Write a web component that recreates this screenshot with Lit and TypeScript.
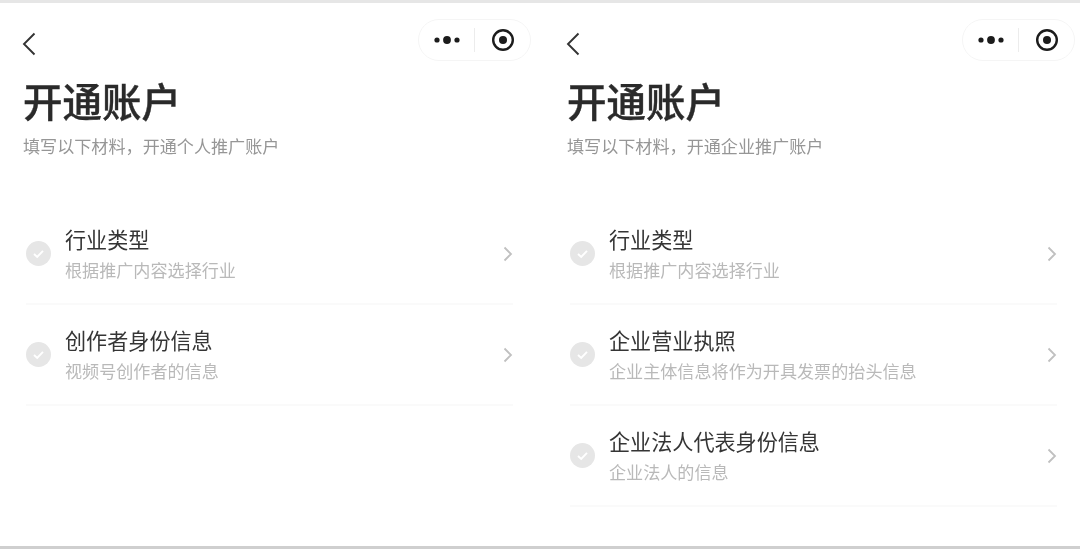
import { html, css, LitElement } from 'lit';
import { customElement, property } from 'lit/decorators.js';

interface Step {
    title: string;
    desc: string;
}

@customElement('account-panel')
export class AccountPanel extends LitElement {
    static styles = css`
        :host {
            display: block;
            flex: none;
            width: 544px;
            box-sizing: border-box;
            filter: blur(0.5px);
        }

        .nav {
            height: 53px;
            display: flex;
            justify-content: space-between;
            padding: 16px 13px 0 22px;
        }

        .back {
            width: 14px;
            height: 24px;
            margin-top: 13px;
        }

        .capsule {
            width: 113px;
            height: 42px;
            box-sizing: border-box;
            border: 1px solid #f5f5f5;
            border-radius: 21px;
            display: flex;
            align-items: center;
        }

        .capsule div {
            flex: 1;
            height: 24px;
            display: flex;
            align-items: center;
            justify-content: center;
        }

        .capsule div + div {
            border-left: 1px solid #ececec;
        }

        .head {
            padding: 0 23px;
        }

        h1 {
            margin: 0;
            font-size: 39.5px;
            line-height: 56px;
            font-weight: 500;
            color: #2a2a2a;
            -webkit-text-stroke: 0.4px #2a2a2a;
        }

        .intro {
            margin: 6px 0 0;
            font-size: 17.1px;
            line-height: 24px;
            color: #969696;
        }

        .list {
            margin: 46px 31px 0 26px;
        }

        .row {
            height: 101px;
            box-sizing: border-box;
            border-bottom: 2px solid #fafafa;
            display: flex;
            align-items: center;
            gap: 14px;
        }

        .check {
            width: 25px;
            height: 25px;
            flex: none;
        }

        .text {
            flex: 1;
            margin-top: -1px;
        }

        .title {
            font-size: 21.1px;
            line-height: 30px;
            color: #353535;
        }

        .desc {
            font-size: 17.1px;
            line-height: 24px;
            margin-top: 4px;
            color: #b9b9b9;
        }

        .arrow {
            width: 10px;
            height: 16px;
            flex: none;
        }
    `;

    @property({ type: String }) intro = '';
    @property({ attribute: false }) steps: Step[] = [];

    render() {
        return html`
            <div class="nav">
                <svg class="back" viewBox="0 0 14 24" fill="none" stroke="#333" stroke-width="1.9">
                    <path d="M12.5 1.5 2 12l10.5 10.5" />
                </svg>
                <div class="capsule">
                    <div>
                        <svg width="28" height="10" viewBox="0 0 28 10" fill="#1c1c1c">
                            <circle cx="4" cy="5" r="2.6" />
                            <circle cx="14" cy="5" r="3.9" />
                            <circle cx="24" cy="5" r="2.6" />
                        </svg>
                    </div>
                    <div>
                        <svg width="24" height="24" viewBox="0 0 24 24">
                            <circle cx="12" cy="12" r="9.8" fill="none" stroke="#1c1c1c" stroke-width="2.4" />
                            <circle cx="12" cy="12" r="4" fill="#1c1c1c" />
                        </svg>
                    </div>
                </div>
            </div>
            <div class="head">
                <h1>开通账户</h1>
                <p class="intro">${this.intro}</p>
            </div>
            <div class="list">
                ${this.steps.map(
                    (step) => html`
                        <div class="row">
                            <svg class="check" viewBox="0 0 25 25">
                                <circle cx="12.5" cy="12.5" r="12.5" fill="#e6e6e6" />
                                <path d="M8 13l3.2 3L17 9.800" fill="none" stroke="#fff" stroke-width="1.9" />
                            </svg>
                            <div class="text">
                                <div class="title">${step.title}</div>
                                <div class="desc">${step.desc}</div>
                            </div>
                            <svg class="arrow" viewBox="0 0 10 16" fill="none" stroke="#c0c0c0" stroke-width="1.8">
                                <path d="M1.500 1.500 8 8l-6.500 6.500" />
                            </svg>
                        </div>
                    `
                )}
            </div>
        `;
    }
}

@customElement('app-root')
export class AppRoot extends LitElement {
    static styles = css`
        :host {
            display: block;
            width: 1080px;
            height: 549px;
            box-sizing: border-box;
            overflow: hidden;
            background: #fff;
            border-top: 3px solid #e6e6e6;
            border-bottom: 3px solid #cfcfcf;
        }

        .panels {
            display: flex;
            font-family: "Noto Sans CJK SC", sans-serif;
        }
    `;

    private personal: Step[] = [
        { title: '行业类型', desc: '根据推广内容选择行业' },
        { title: '创作者身份信息', desc: '视频号创作者的信息' },
    ];

    private company: Step[] = [
        { title: '行业类型', desc: '根据推广内容选择行业' },
        { title: '企业营业执照', desc: '企业主体信息将作为开具发票的抬头信息' },
        { title: '企业法人代表身份信息', desc: '企业法人的信息' },
    ];

    render() {
        return html`
            <div class="panels">
                <account-panel intro="填写以下材料，开通个人推广账户" .steps=${this.personal}></account-panel>
                <account-panel intro="填写以下材料，开通企业推广账户" .steps=${this.company}></account-panel>
            </div>
        `;
    }
}

declare global {
    interface HTMLElementTagNameMap {
        'app-root': AppRoot;
        'account-panel': AccountPanel;
    }
}
